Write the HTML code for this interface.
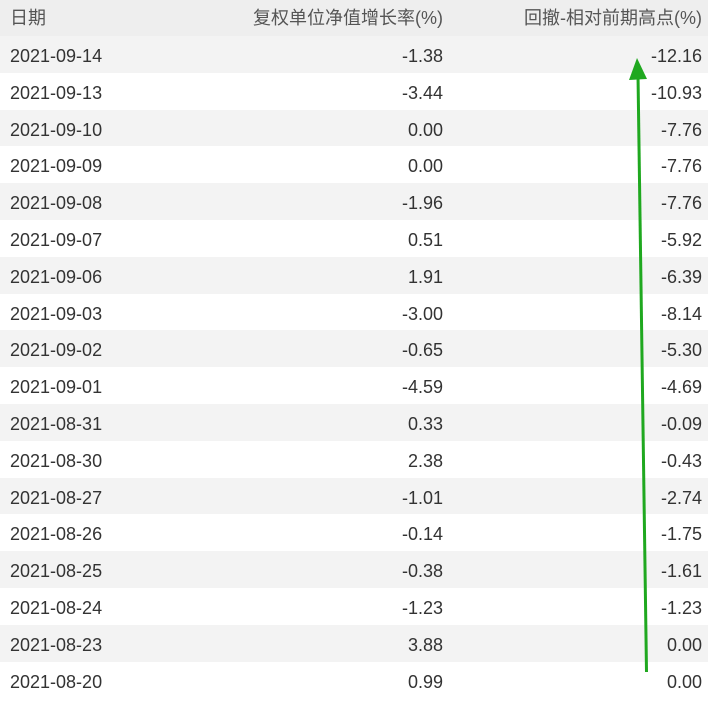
<!DOCTYPE html>
<html><head><meta charset="utf-8"><style>
body{margin:0;background:#fff;width:720px;height:695px;overflow:hidden;position:relative;font-family:"Liberation Sans","Noto Sans CJK SC",sans-serif;color:#333;font-size:18px}
.r{position:absolute;left:0;width:708px;height:36.8px;line-height:40px}
.r.g{background:#f3f3f3}
.r.h{background:#eeeeee;color:#555;height:36px;line-height:36px}
.a{position:absolute;left:10px}
.b{position:absolute;right:265px}
.c{position:absolute;right:6px}
svg{position:absolute;left:0;top:0}
</style></head><body>
<div class="r h" style="top:0"><span class="a">日期</span><span class="b">复权单位净值增长率(%)</span><span class="c">回撤-相对前期高点(%)</span></div>
<div class="r g" style="top:36px"><span class="a">2021-09-14</span><span class="b">-1.38</span><span class="c">-12.16</span></div>
<div class="r" style="top:72.8px"><span class="a">2021-09-13</span><span class="b">-3.44</span><span class="c">-10.93</span></div>
<div class="r g" style="top:109.6px"><span class="a">2021-09-10</span><span class="b">0.00</span><span class="c">-7.76</span></div>
<div class="r" style="top:146.4px"><span class="a">2021-09-09</span><span class="b">0.00</span><span class="c">-7.76</span></div>
<div class="r g" style="top:183.2px"><span class="a">2021-09-08</span><span class="b">-1.96</span><span class="c">-7.76</span></div>
<div class="r" style="top:220px"><span class="a">2021-09-07</span><span class="b">0.51</span><span class="c">-5.92</span></div>
<div class="r g" style="top:256.8px"><span class="a">2021-09-06</span><span class="b">1.91</span><span class="c">-6.39</span></div>
<div class="r" style="top:293.6px"><span class="a">2021-09-03</span><span class="b">-3.00</span><span class="c">-8.14</span></div>
<div class="r g" style="top:330.4px"><span class="a">2021-09-02</span><span class="b">-0.65</span><span class="c">-5.30</span></div>
<div class="r" style="top:367.2px"><span class="a">2021-09-01</span><span class="b">-4.59</span><span class="c">-4.69</span></div>
<div class="r g" style="top:404px"><span class="a">2021-08-31</span><span class="b">0.33</span><span class="c">-0.09</span></div>
<div class="r" style="top:440.8px"><span class="a">2021-08-30</span><span class="b">2.38</span><span class="c">-0.43</span></div>
<div class="r g" style="top:477.6px"><span class="a">2021-08-27</span><span class="b">-1.01</span><span class="c">-2.74</span></div>
<div class="r" style="top:514.4px"><span class="a">2021-08-26</span><span class="b">-0.14</span><span class="c">-1.75</span></div>
<div class="r g" style="top:551.2px"><span class="a">2021-08-25</span><span class="b">-0.38</span><span class="c">-1.61</span></div>
<div class="r" style="top:588px"><span class="a">2021-08-24</span><span class="b">-1.23</span><span class="c">-1.23</span></div>
<div class="r g" style="top:624.8px"><span class="a">2021-08-23</span><span class="b">3.88</span><span class="c">0.00</span></div>
<div class="r" style="top:661.6px"><span class="a">2021-08-20</span><span class="b">0.99</span><span class="c">0.00</span></div>
<svg width="720" height="695"><line x1="646.5" y1="672" x2="638" y2="75" stroke="#1fa81f" stroke-width="3"/><polygon points="629,80 647,79 637,58" fill="#1fa81f"/></svg>
</body></html>
